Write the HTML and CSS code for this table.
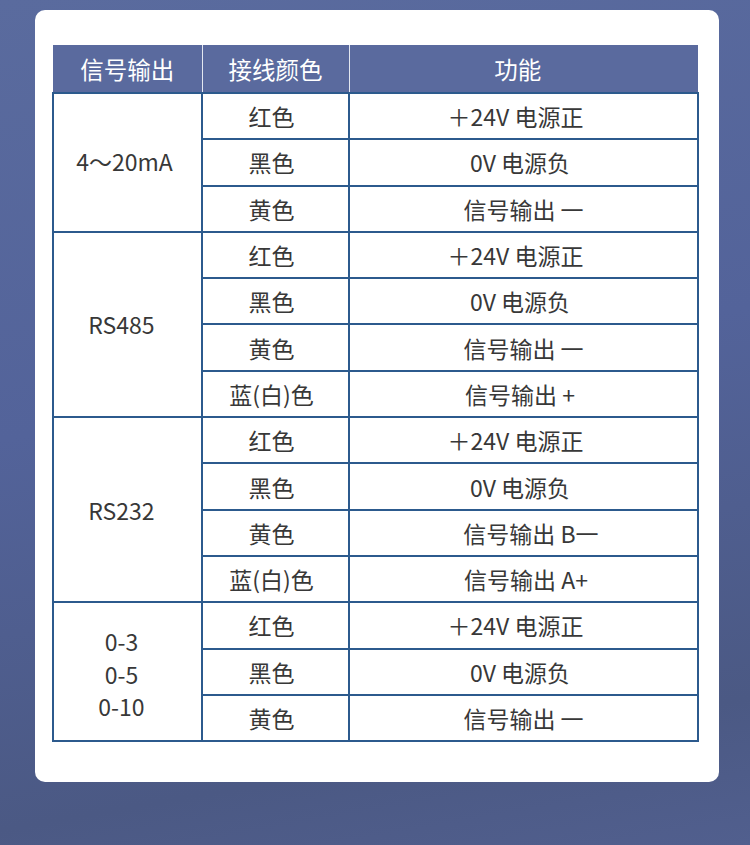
FILE: index.html
```html
<!DOCTYPE html>
<html lang="zh-CN">
<head>
<meta charset="utf-8">
<title>接线说明</title>
<link rel="stylesheet" href="styles.css">
</head>
<body>
<div class="page">
  <div class="card">
    <table class="wiring">
      <colgroup>
        <col class="c1"><col class="c2"><col class="c3">
      </colgroup>
      <thead>
        <tr class="head">
          <th>信号输出</th><th>接线颜色</th><th class="h-func">功能</th>
        </tr>
      </thead>
      <tbody>
        <tr><td rowspan="3" class="sig sig-top">4～20mA</td><td class="color">红色</td><td class="f-pos">＋24V 电源正</td></tr>
        <tr><td class="color">黑色</td><td class="f-neg">0V 电源负</td></tr>
        <tr><td class="color">黄色</td><td>信号输出 一</td></tr>

        <tr><td rowspan="4" class="sig sig-mid">RS485</td><td class="color">红色</td><td class="f-pos">＋24V 电源正</td></tr>
        <tr><td class="color">黑色</td><td class="f-neg">0V 电源负</td></tr>
        <tr><td class="color">黄色</td><td>信号输出 一</td></tr>
        <tr><td class="color">蓝(白)色</td><td class="f-plus">信号输出 +</td></tr>

        <tr><td rowspan="4" class="sig sig-mid">RS232</td><td class="color">红色</td><td class="f-pos">＋24V 电源正</td></tr>
        <tr><td class="color">黑色</td><td class="f-neg">0V 电源负</td></tr>
        <tr><td class="color">黄色</td><td class="f-b">信号输出 B一</td></tr>
        <tr><td class="color">蓝(白)色</td><td class="f-a">信号输出 A+</td></tr>

        <tr><td rowspan="3" class="sig sig-mid sig-multi">0-3<br>0-5<br>0-10</td><td class="color">红色</td><td class="f-pos">＋24V 电源正</td></tr>
        <tr><td class="color">黑色</td><td class="f-neg">0V 电源负</td></tr>
        <tr><td class="color">黄色</td><td>信号输出 一</td></tr>
      </tbody>
    </table>
  </div>
</div>
</body>
</html>
```

FILE: styles.css
```css
html, body {
  margin: 0;
  padding: 0;
}
body {
  width: 750px;
  height: 845px;
  overflow: hidden;
  background: linear-gradient(170deg, #5a6b9e 0%, #53639a 45%, #4b5984 85%, #515f8e 100%);
  font-family: "Noto Sans CJK SC", "Noto Sans", sans-serif;
  color: #383838;
}
.page {
  padding: 10px 31px 0 35px;
}
.card {
  background: #fff;
  border-radius: 10px;
  padding: 35px 22px 40px 17px;
  width: 645px;
}
.wiring {
  border-collapse: collapse;
  width: 645px;
  table-layout: fixed;
}
.c1 { width: 149px; }
.c2 { width: 147px; }
.c3 { width: 349px; }
.head th {
  background: #5a6a9e;
  color: #fff;
  font-weight: 400;
  font-size: 23.5px;
  height: 47px;
  padding: 0;
  border: none;
  border-left: 1px solid #e3e7f0;
}
.head th:first-child {
  border-left: none;
}
.head th.h-func {
  padding-right: 12px;
}
.wiring td {
  border: 2px solid #2c5a8d;
  text-align: center;
  font-size: 23px;
  padding: 0;
  height: 44.3px;
  line-height: 30px;
}
.wiring td.sig {
  padding-right: 6px;
}
.wiring td.sig-mid {
  padding-right: 12px;
}
.wiring td.sig-multi {
  line-height: 32.5px;
  padding-top: 5px;
}
.wiring td.sig-top {
  padding-bottom: 3px;
}
.wiring td.color {
  padding-right: 8px;
}
.wiring td.f-pos {
  padding-right: 16px;
}
.wiring td.f-neg {
  padding-right: 7px;
}
.wiring td.f-plus {
  padding-right: 7px;
}
.wiring td.f-b {
  padding-left: 15px;
}
.wiring td.f-a {
  padding-left: 5px;
}
```
